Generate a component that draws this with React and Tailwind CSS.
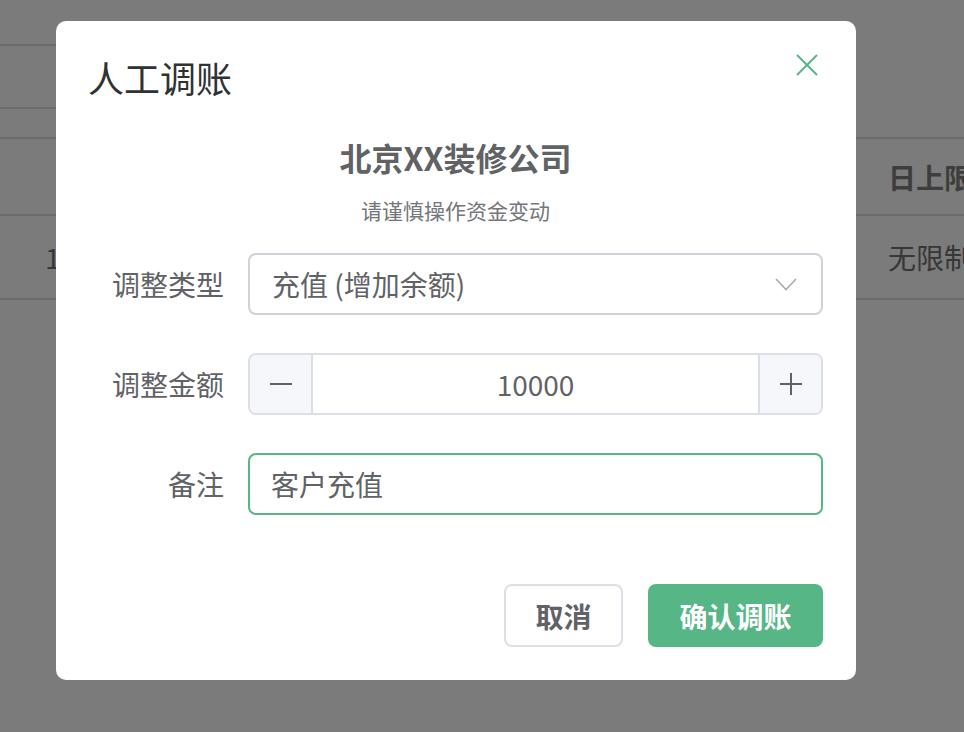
import React from "react";

const CloseIcon = () => (
  <svg width="22" height="22" viewBox="0 0 22 22" fill="none" stroke="#56b685" strokeWidth="2">
    <line x1="1" y1="1" x2="21" y2="21" />
    <line x1="21" y1="1" x2="1" y2="21" />
  </svg>
);

const Chevron = () => (
  <svg width="22" height="13" viewBox="0 0 22 13" fill="none" stroke="#a8abb2" strokeWidth="1.6">
    <polyline points="1,1 11,11.5 21,1" />
  </svg>
);

const Minus = () => (
  <svg width="24" height="24" viewBox="0 0 24 24" fill="none" stroke="#606266" strokeWidth="2">
    <line x1="1" y1="12" x2="23" y2="12" />
  </svg>
);

const Plus = () => (
  <svg width="24" height="24" viewBox="0 0 24 24" fill="none" stroke="#606266" strokeWidth="2">
    <line x1="1" y1="12" x2="23" y2="12" />
    <line x1="12" y1="1" x2="12" y2="23" />
  </svg>
);

const Row = ({ label, children }) => (
  <div className="flex items-center">
    <label className="w-[136px] mr-[24px] text-right text-[28px] leading-none text-[#606266]">{label}</label>
    {children}
  </div>
);

const App = () => {
  return (
    <div className="relative h-[732px] w-[964px] overflow-hidden bg-[#f6f6f6] font-['Noto_Sans_CJK_SC','Noto_Sans',sans-serif]">
      {/* page under the dialog */}
      <div className="pt-[44px]">
        <div className="h-[65px] w-[700px] border-y-2 border-[#d9d9d9]"></div>
        <div className="mt-[28px] border-t-2 border-[#d9d9d9]">
          <div className="grid h-[77px] grid-cols-[888px_1fr] items-center border-b-2 border-[#d9d9d9] text-[28px] font-bold text-[#7a7a7a]">
            <div></div>
            <div className="whitespace-nowrap">日上限</div>
          </div>
          <div className="grid h-[84px] grid-cols-[888px_1fr] items-center border-b-2 border-[#d9d9d9] text-[28px] text-[#6e6e6e]">
            <div className="pl-[45px]">1</div>
            <div className="whitespace-nowrap">无限制</div>
          </div>
        </div>
      </div>

      {/* mask + dialog */}
      <div className="absolute inset-0 bg-black/50 pl-[56px] pt-[21px]">
        <div className="flex h-[659px] w-[800px] flex-col rounded-[10px] bg-white pb-[33px] pl-[32px] pr-[33px] pt-[38px]">
          <div className="flex items-start justify-between">
            <h2 className="text-[36px] leading-none text-[#303133]">人工调账</h2>
            <button className="mr-[5px] mt-[-5px]"><CloseIcon /></button>
          </div>

          <div className="mt-[46px] text-center text-[32px] font-bold leading-none text-[#606266]">北京XX装修公司</div>
          <div className="mt-[27px] text-center text-[21px] leading-none text-[#73767a]">请谨慎操作资金变动</div>

          <div className="mt-[32px] flex flex-col gap-[38px]">
            <Row label="调整类型">
              <div className="flex h-[62px] flex-1 items-center justify-between rounded-[8px] border-2 border-[#cfd2d8] pl-[22px] pr-[24px]">
                <span className="text-[28px] text-[#606266]">充值 (增加余额)</span>
                <Chevron />
              </div>
            </Row>
            <Row label="调整金额">
              <div className="flex h-[62px] flex-1 overflow-hidden rounded-[8px] border-2 border-[#dcdfe6]">
                <button className="flex w-[63px] items-center justify-center border-r-2 border-[#dcdfe6] bg-[#f5f7fa]"><Minus /></button>
                <div className="flex flex-1 items-center justify-center text-[28px] text-[#606266]">10000</div>
                <button className="flex w-[63px] items-center justify-center border-l-2 border-[#dcdfe6] bg-[#f5f7fa]"><Plus /></button>
              </div>
            </Row>
            <Row label="备注">
              <div className="flex h-[62px] flex-1 items-center rounded-[8px] border-2 border-[#56b685] pl-[21px]">
                <span className="text-[28px] text-[#606266]">客户充值</span>
              </div>
            </Row>
          </div>

          <div className="mt-auto flex justify-end gap-[25px]">
            <button className="h-[63px] w-[119px] rounded-[8px] border-2 border-[#dcdfe6] text-[28px] font-bold text-[#606266]">取消</button>
            <button className="h-[63px] w-[175px] rounded-[8px] bg-[#56b685] text-[28px] font-bold text-white">确认调账</button>
          </div>
        </div>
      </div>
    </div>
  );
};

export default App;
